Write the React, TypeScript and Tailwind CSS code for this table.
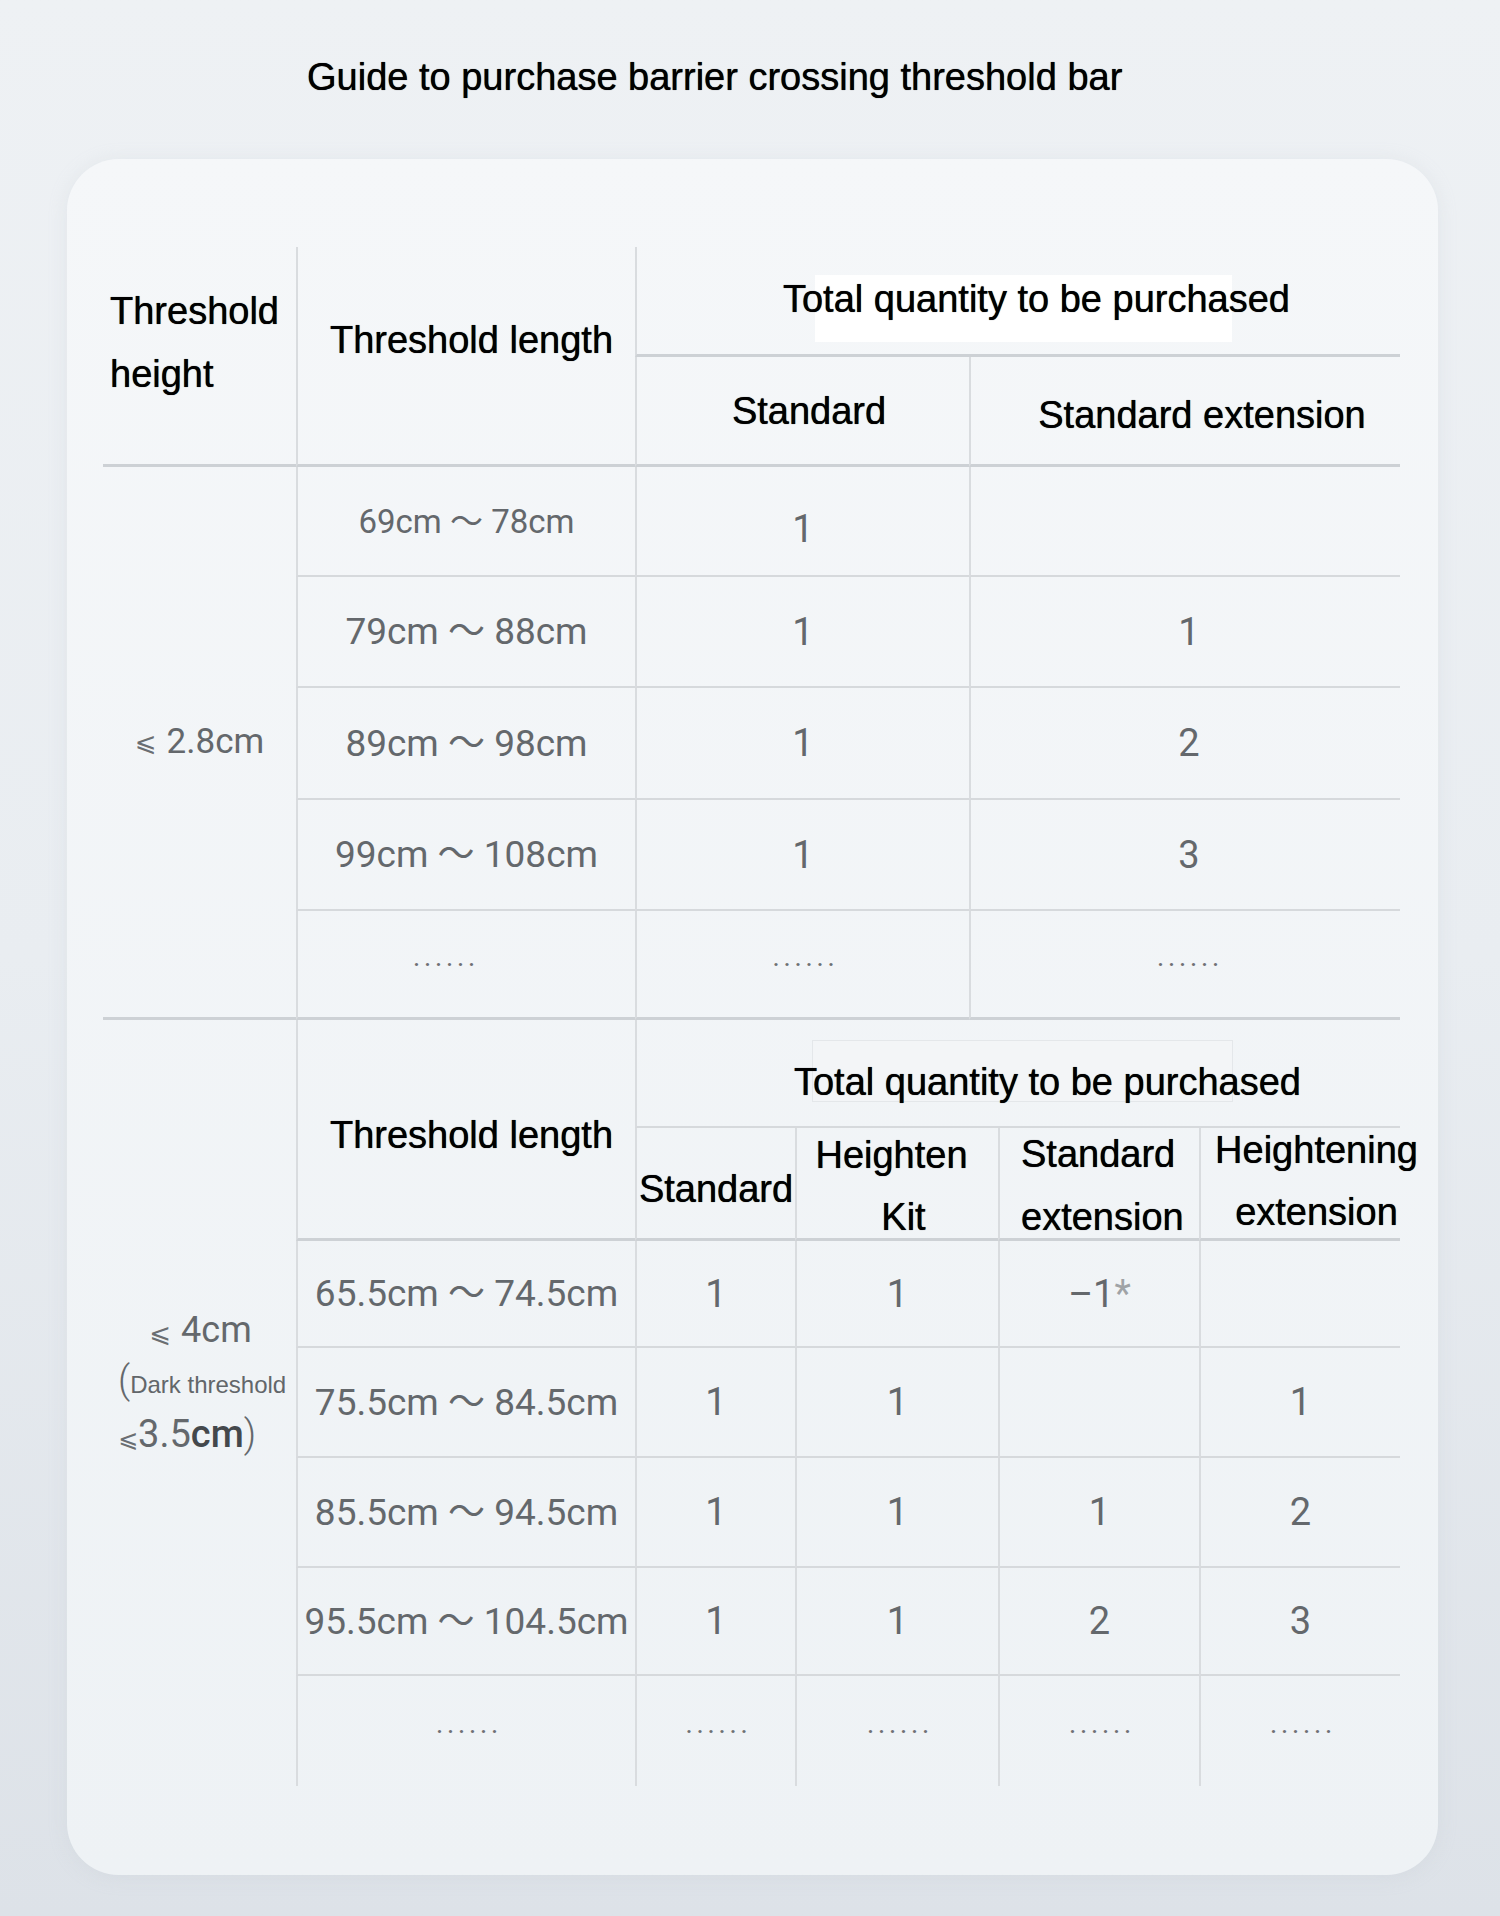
import React from "react";

const head =
  "font-['Liberation_Sans',Arial,sans-serif] text-[38px] text-black whitespace-nowrap [text-shadow:0_0_0.7px_#000]";
const data = "font-['Roboto','Noto_Sans_CJK_SC',sans-serif] font-normal text-[#64686c] whitespace-nowrap";
const leq = "font-['DejaVu_Sans',sans-serif] font-normal text-[#6a6e72]";

const vLine = "border-l-2 border-[#d9dcdf]";
const rowLine = "border-b-2 border-b-[#d6d9dc]";
const thickLine = "border-b-[3px] border-b-[#cdd1d5]";

function Dots({ className = "" }: { className?: string }) {
  return (
    <span className={`font-['Roboto',sans-serif] font-bold text-[20px] tracking-[5px] text-[#6e7174] ${className}`}>
      ······
    </span>
  );
}

const lowRows = [
  { length: "69cm ～ 78cm", size: "text-[33px]", std: "1", ext: "", pad: "pt-[16px]" },
  { length: "79cm ～ 88cm", size: "text-[37px]", std: "1", ext: "1", pad: "" },
  { length: "89cm ～ 98cm", size: "text-[37px]", std: "1", ext: "2", pad: "" },
  { length: "99cm ～ 108cm", size: "text-[37px]", std: "1", ext: "3", pad: "" },
];

const highRows = [
  { length: "65.5cm ～ 74.5cm", std: "1", kit: "1", ext: "–1*", hExt: "" },
  { length: "75.5cm ～ 84.5cm", std: "1", kit: "1", ext: "", hExt: "1" },
  { length: "85.5cm ～ 94.5cm", std: "1", kit: "1", ext: "1", hExt: "2" },
  { length: "95.5cm ～ 104.5cm", std: "1", kit: "1", ext: "2", hExt: "3" },
];

function Value({ v }: { v: string }) {
  if (v.endsWith("*")) {
    return (
      <span>
        {v.slice(0, -1)}
        <span className="text-[#a0a3a6]">*</span>
      </span>
    );
  }
  return <span>{v}</span>;
}

function LowThresholdTable() {
  return (
    <div className="grid grid-cols-[193px_339px_334px_431px] grid-rows-[110px_110px_110px_111px_112px_111px_109px]">
      {/* Header */}
      <div className={`row-span-2 flex items-center pl-[7px] pb-[25px] ${thickLine} ${head}`}>
        <div className="leading-[63px]">
          Threshold
          <br />
          height
        </div>
      </div>
      <div className={`row-span-2 flex items-center justify-center pl-[10px] pb-[31px] leading-[44px] ${vLine} ${thickLine} ${head}`}>
        Threshold length
      </div>
      <div className={`relative col-span-2 flex items-center justify-center pl-[36px] pb-[3px] leading-[44px] ${vLine} ${thickLine} ${head}`}>
        <div className="absolute left-[178px] top-[28px] h-[67px] w-[417px] bg-white" />
        <span className="relative">Total quantity to be purchased</span>
      </div>
      <div className={`flex items-center justify-center pl-[12px] leading-[44px] ${vLine} ${thickLine} ${head}`}>
        Standard
      </div>
      <div className={`flex items-center justify-center pl-[33px] pt-[8px] leading-[44px] ${vLine} ${thickLine} ${head}`}>
        Standard extension
      </div>

      {/* Body */}
      <div className={`row-span-5 flex items-center justify-center ${thickLine} ${data} text-[35px]`}>
        <span className={`${leq} text-[26px] mr-[10px]`}>⩽</span>2.8cm
      </div>
      {lowRows.map((r) => (
        <React.Fragment key={r.length}>
          <div className={`flex items-center justify-center leading-none ${vLine} ${rowLine} ${data} ${r.size}`}>
            {r.length}
          </div>
          <div className={`flex items-center justify-center leading-none ${vLine} ${rowLine} ${data} text-[38px] ${r.pad}`}>
            {r.std}
          </div>
          <div className={`flex items-center justify-center leading-none pl-[7px] ${vLine} ${rowLine} ${data} text-[38px]`}>
            {r.ext}
          </div>
        </React.Fragment>
      ))}
      <div className={`flex items-center justify-center pr-[40px] ${vLine} ${thickLine}`}>
        <Dots />
      </div>
      <div className={`flex items-center justify-center pl-[6px] ${vLine} ${thickLine}`}>
        <Dots />
      </div>
      <div className={`flex items-center justify-center pl-[10px] ${vLine} ${thickLine}`}>
        <Dots />
      </div>
    </div>
  );
}

function HighThresholdTable() {
  return (
    <div className="grid grid-cols-[193px_339px_160px_203px_201px_201px] grid-rows-[108px_113px_107px_110px_110px_108px_110px]">
      {/* Merged height column */}
      <div className={`row-span-7 flex flex-col justify-center pb-[37px] ${data}`}>
        <div className="self-center pl-[2px] text-[36px] leading-[47px]">
          <span className={`${leq} text-[26px] mr-[10px]`}>⩽</span>4cm
        </div>
        <div className="pl-[15px] leading-[47px]">
          <span className="text-[38px] font-light">(</span>
          <span className="font-['Liberation_Sans',Arial,sans-serif] font-normal text-[24px] text-[#62666a]">
            Dark threshold
          </span>
        </div>
        <div className="pl-[15px] text-[38px] leading-[47px]">
          <span className={`${leq} text-[24px]`}>⩽</span>3.5
          <span className="font-medium text-[#44484c]">cm</span>
          <span className="font-light">)</span>
        </div>
      </div>

      {/* Header */}
      <div className={`row-span-2 flex items-center justify-center pl-[10px] pt-[12px] leading-[44px] ${vLine} ${thickLine} ${head}`}>
        Threshold length
      </div>
      <div className={`relative col-span-4 flex items-center justify-center pl-[58px] pt-[18px] leading-[44px] ${vLine} ${rowLine} ${head}`}>
        <div className="absolute left-[175px] top-[20px] h-[62px] w-[421px] border border-[#e4e7ea] bg-[#f3f5f7]" />
        <span className="relative">Total quantity to be purchased</span>
      </div>
      <div className={`flex items-center justify-center pt-[12px] leading-[44px] ${vLine} ${thickLine} ${head}`}>
        Standard
      </div>
      <div className={`flex flex-col items-center justify-center pt-[6px] leading-[62px] ${vLine} ${thickLine} ${head}`}>
        <span className="pr-[12px]">Heighten</span>
        <span className="pl-[12px]">Kit</span>
      </div>
      <div className={`flex flex-col items-start justify-center pl-[21px] pt-[6px] leading-[63px] ${vLine} ${thickLine} ${head}`}>
        <span>Standard</span>
        <span>extension</span>
      </div>
      <div className={`flex flex-col items-center justify-center pl-[32px] pb-[4px] leading-[62px] ${vLine} ${thickLine} ${head}`}>
        <span>Heightening</span>
        <span>extension</span>
      </div>

      {/* Body */}
      {highRows.map((r) => (
        <React.Fragment key={r.length}>
          <div className={`flex items-center justify-center leading-none text-[37px] ${vLine} ${rowLine} ${data}`}>
            {r.length}
          </div>
          {[r.std, r.kit, r.ext, r.hExt].map((v, i) => (
            <div
              key={i}
              className={`flex items-center justify-center leading-none text-[38px] ${vLine} ${rowLine} ${data}`}
            >
              <Value v={v} />
            </div>
          ))}
        </React.Fragment>
      ))}
      {[0, 1, 2, 3, 4].map((i) => (
        <div key={i} className={`flex items-center justify-center pl-[6px] ${vLine}`}>
          <Dots />
        </div>
      ))}
    </div>
  );
}

export default function App() {
  return (
    <div className="min-h-[1916px] w-[1500px] bg-linear-to-b from-[#eef1f4] via-[#e9edf1] to-[#dde2e8] pb-[41px]">
      <h1 className="pl-[307px] pt-[55px] font-['Liberation_Sans',Arial,sans-serif] text-[38px] font-normal leading-[44px] text-black [text-shadow:0_0_0.7px_#000]">
        Guide to purchase barrier crossing threshold bar
      </h1>

      <div className="ml-[67px] mt-[60px] h-[1716px] w-[1371px] rounded-[52px] bg-linear-to-b from-[#f5f7f9] to-[#eef2f5] pl-[36px] pt-[88px] shadow-[0_2px_18px_rgba(190,198,208,0.25)]">
        <LowThresholdTable />
        <HighThresholdTable />
      </div>
    </div>
  );
}
